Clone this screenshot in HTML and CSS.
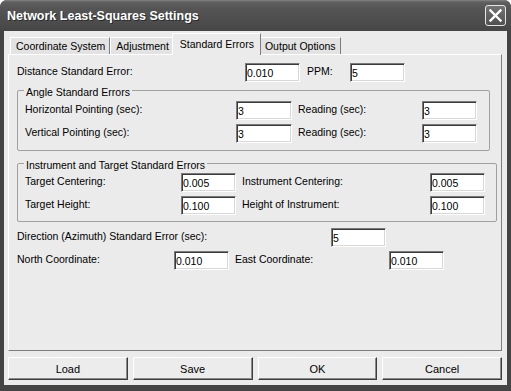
FILE: index.html
```html
<!DOCTYPE html>
<html>
<head>
  <title>Network Least-Squares Settings</title>
  <link rel="stylesheet" href="styles.css">
</head>
<body>
  <div class="window">
    <div class="titlebar">
      <span class="title">Network Least-Squares Settings</span>
      <button class="close" type="button">
        <svg width="15" height="15" viewBox="0 0 15 15">
          <path d="M2.5 2.5 L12.5 12.5 M12.5 2.5 L2.5 12.5" stroke="#fff" stroke-width="2.4" stroke-linecap="square"/>
        </svg>
      </button>
    </div>

    <div class="client">
      <div class="tabs">
        <div class="tab">Coordinate System</div>
        <div class="tab">Adjustment</div>
        <div class="tab active">Standard Errors</div>
        <div class="tab">Output Options</div>
      </div>

      <div class="panel">
        <div class="row">
          <label class="lbl w-dist">Distance Standard Error:</label>
          <input class="field" type="text" value="0.010">
          <label class="lbl w-ppm">PPM:</label>
          <input class="field" type="text" value="5">
        </div>

        <fieldset class="group group-angle">
          <legend>Angle Standard Errors</legend>
          <div class="row">
            <label class="lbl w-point">Horizontal Pointing (sec):</label>
            <input class="field wide" type="text" value="3">
            <label class="lbl w-read">Reading (sec):</label>
            <input class="field" type="text" value="3">
          </div>
          <div class="row">
            <label class="lbl w-point">Vertical Pointing (sec):</label>
            <input class="field wide" type="text" value="3">
            <label class="lbl w-read">Reading (sec):</label>
            <input class="field" type="text" value="3">
          </div>
        </fieldset>

        <fieldset class="group group-inst">
          <legend>Instrument and Target Standard Errors</legend>
          <div class="row">
            <label class="lbl w-target">Target Centering:</label>
            <input class="field" type="text" value="0.005">
            <label class="lbl w-inst">Instrument Centering:</label>
            <input class="field" type="text" value="0.005">
          </div>
          <div class="row">
            <label class="lbl w-target">Target Height:</label>
            <input class="field" type="text" value="0.100">
            <label class="lbl w-inst">Height of Instrument:</label>
            <input class="field" type="text" value="0.100">
          </div>
        </fieldset>

        <div class="row row-dir">
          <label class="lbl w-dir">Direction (Azimuth) Standard Error (sec):</label>
          <input class="field" type="text" value="5">
        </div>
        <div class="row row-coord">
          <label class="lbl w-north">North Coordinate:</label>
          <input class="field" type="text" value="0.010">
          <label class="lbl w-east">East Coordinate:</label>
          <input class="field" type="text" value="0.010">
        </div>
      </div>

      <div class="buttons">
        <button type="button" class="btn">Load</button>
        <button type="button" class="btn">Save</button>
        <button type="button" class="btn">OK</button>
        <button type="button" class="btn">Cancel</button>
      </div>
    </div>
  </div>
</body>
</html>
```

FILE: styles.css
```css
body {
  margin: 0;
  font-family: "Liberation Sans", Arial, sans-serif;
  font-size: 10.5px;
  color: #000000;
  background-color: #ffffff;
}

.window {
  width: 511px;
  height: 391px;
  display: flex;
  flex-direction: column;
  background-color: #444444;
  border-radius: 7px 7px 0 0;
  overflow: hidden;
}

.titlebar {
  height: 31px;
  flex: none;
  display: flex;
  align-items: center;
  justify-content: space-between;
  padding: 0 5px 0 7px;
  background: linear-gradient(#858585 0, #606060 2px, #555555 8px, #4b4b4b 24px, #464646 100%);
}

.title {
  color: #ffffff;
  font-weight: bold;
  font-size: 12.5px;
  text-shadow: 1px 1px 0 #2a2a2a;
}

.close {
  width: 21px;
  height: 21px;
  padding: 0;
  display: flex;
  align-items: center;
  justify-content: center;
  border: 1px solid #e6e6e6;
  border-radius: 3px;
  background: linear-gradient(#747474, #505050);
}

.client {
  flex: 1;
  display: flex;
  flex-direction: column;
  margin: 0 4px 6px;
  padding: 2px 5px 5px 4px;
  background-color: #ebebeb;
}

.tabs {
  height: 21px;
  flex: none;
  display: flex;
  align-items: flex-start;
  padding-left: 2px;
  position: relative;
  z-index: 1;
}

.tab {
  height: 17px;
  margin-top: 4px;
  line-height: 16px;
  padding: 0 4px 0 5px;
  box-sizing: border-box;
  white-space: nowrap;
  border-top: 1px solid #ffffff;
  border-left: 1px solid #ffffff;
  border-right: 1px solid #7e7e7e;
  background-color: #e3e3e3;
}

.tab.active {
  height: 22px;
  margin: 0 -2px 0 -2px;
  padding: 0 6px 0 7px;
  line-height: 20px;
  background-color: #ebebeb;
  position: relative;
  z-index: 2;
}

.panel {
  height: 297px;
  flex: none;
  box-sizing: border-box;
  padding: 8px 0 0 8px;
  border: 1px solid;
  border-color: #ffffff #7e7e7e #7e7e7e #ffffff;
  background-color: #ebebeb;
}

.row {
  height: 19px;
  display: flex;
  align-items: flex-start;
}

.row + .row {
  margin-top: 4px;
}

.lbl {
  flex: none;
  padding-top: 2px;
  line-height: 12px;
  white-space: nowrap;
}

.field {
  width: 55px;
  height: 19px;
  flex: none;
  box-sizing: border-box;
  margin: 0;
  padding: 0 0 0 1px;
  font: inherit;
  color: #000000;
  background-color: #ffffff;
  border: 1px solid;
  border-color: #7a7a7a #ffffff #ffffff #7a7a7a;
  box-shadow: inset 1px 1px 0 #3a3a3a, inset -1px -1px 0 #d8d8d8;
}

.field.wide {
  width: 56px;
}

.w-dist { width: 228px; }
.w-ppm { width: 43px; margin-left: 7px; }
.w-point { width: 211px; }
.w-read { width: 124px; margin-left: 6px; }
.w-target { width: 156px; }
.w-inst { width: 188px; margin-left: 6px; }
.w-dir { width: 314px; }
.w-north { width: 157px; }
.w-east { width: 154px; margin-left: 6px; }

.group {
  box-sizing: border-box;
  margin: 1px 0 0;
  padding: 3px 0 7px 7px;
  min-width: 0;
  border: 1px solid #a0a0a0;
  border-radius: 2px;
}

.group legend {
  margin-left: -1px;
  padding: 3px 2px 0;
  line-height: 12px;
}

.group-angle {
  width: 473px;
}

.group-inst {
  width: 480px;
  margin-top: 5px;
  padding-top: 2px;
  padding-bottom: 6px;
}

.row-dir {
  margin-top: 6px;
}

.row-dir + .row-coord {
  margin-top: 4px;
}

.buttons {
  display: flex;
  gap: 5px;
  margin-top: 6px;
}

.btn {
  flex: 1;
  height: 23px;
  padding: 0;
  font: inherit;
  font-size: 11px;
  color: #000000;
  background-color: #ececec;
  border: 1px solid;
  border-color: #ffffff #3c3c3c #3c3c3c #ffffff;
  box-shadow: inset -1px -1px 0 #8a8a8a;
}
```
